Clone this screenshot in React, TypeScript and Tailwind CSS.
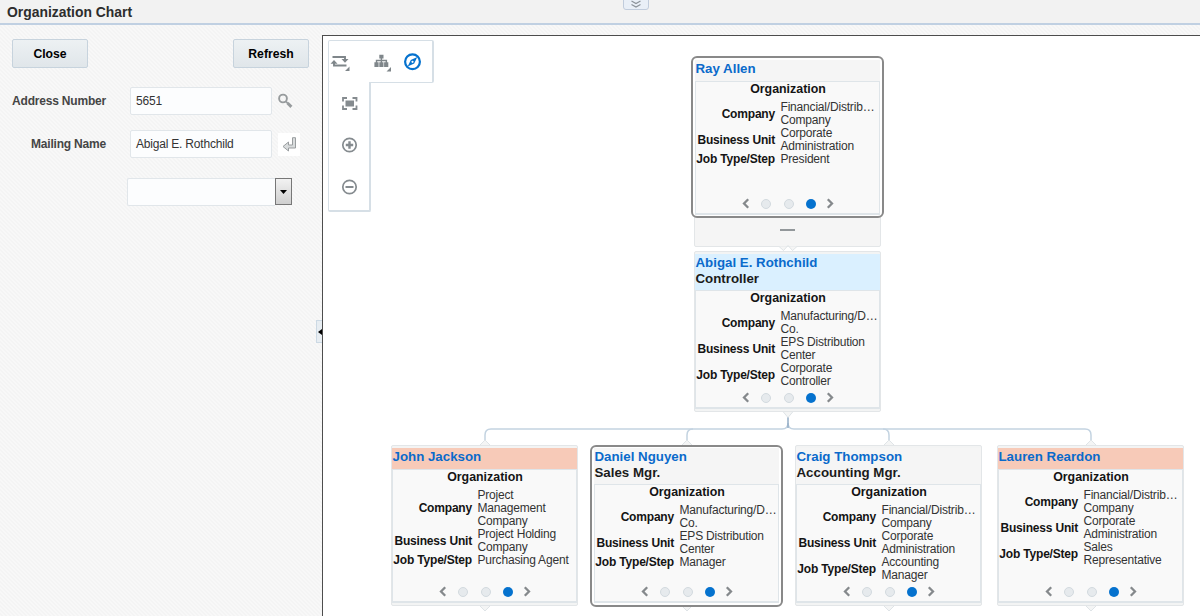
import React from 'react';
import clsx from 'clsx';

interface Field {
  label: string;
  lines: string[];
}

interface Person {
  name: string;
  title?: string;
  tone: 'plain' | 'focus' | 'alert';
  outlined?: boolean;
  fields: Field[];
}

const buildFields = (company: string[], unit: string[], job: string[]): Field[] => [
  { label: 'Company', lines: company },
  { label: 'Business Unit', lines: unit },
  { label: 'Job Type/Step', lines: job },
];

const ray: Person = {
  name: 'Ray Allen',
  tone: 'plain',
  outlined: true,
  fields: buildFields(['Financial/Distrib…', 'Company'], ['Corporate', 'Administration'], ['President']),
};

const abigal: Person = {
  name: 'Abigal E. Rothchild',
  title: 'Controller',
  tone: 'focus',
  fields: buildFields(['Manufacturing/D…', 'Co.'], ['EPS Distribution', 'Center'], ['Corporate', 'Controller']),
};

const john: Person = {
  name: 'John Jackson',
  tone: 'alert',
  fields: buildFields(['Project', 'Management', 'Company'], ['Project Holding', 'Company'], ['Purchasing Agent']),
};

const daniel: Person = {
  name: 'Daniel Nguyen',
  title: 'Sales Mgr.',
  tone: 'plain',
  outlined: true,
  fields: buildFields(['Manufacturing/D…', 'Co.'], ['EPS Distribution', 'Center'], ['Manager']),
};

const craig: Person = {
  name: 'Craig Thompson',
  title: 'Accounting Mgr.',
  tone: 'plain',
  fields: buildFields(['Financial/Distrib…', 'Company'], ['Corporate', 'Administration'], ['Accounting', 'Manager']),
};

const lauren: Person = {
  name: 'Lauren Reardon',
  tone: 'alert',
  fields: buildFields(['Financial/Distrib…', 'Company'], ['Corporate', 'Administration'], ['Sales', 'Representative']),
};

const Chevron: React.FC<{ flip?: boolean }> = ({ flip }) => (
  <svg width="8" height="11" viewBox="0 0 8 11" className={clsx('shrink-0', flip && 'rotate-180')}>
    <path d="M6.2 1.2 2 5.5l4.2 4.3" fill="none" stroke="#85898c" strokeWidth="2.3" />
  </svg>
);

const Pager: React.FC = () => (
  <div className="mt-auto mb-1 flex h-[11px] items-center pl-[46px]">
    <Chevron />
    <span className="ml-[11px] size-[10px] rounded-full border border-[#d3dadf] bg-[#e6eaed]" />
    <span className="ml-[13px] size-[10px] rounded-full border border-[#d3dadf] bg-[#e6eaed]" />
    <span className="mr-[10px] ml-[12px] size-[10px] rounded-full bg-[#0572ce]" />
    <Chevron flip />
  </div>
);

const PersonCard: React.FC<{ person: Person }> = ({ person }) => (
  <div
    className={clsx(
      'flex flex-col',
      person.outlined
        ? 'h-[162px] w-[193px] rounded-[6px] border-2 border-[#898989] bg-white px-[2px]'
        : 'h-[161px] w-[187px] rounded-[2px] border border-[#e3e6e8] bg-[#f3f4f4] pt-[2px] pb-[2px]',
      person.outlined && (person.title ? 'pt-px pb-[2px]' : 'pt-[2px] pb-px')
    )}
  >
    <div
      className={clsx(
        'w-full shrink-0 text-[13.3px] leading-[17px] font-bold whitespace-nowrap',
        person.title ? 'h-[36px]' : 'h-[21px]',
        person.tone === 'plain' && 'bg-[#f5f5f5]',
        person.tone === 'focus' && 'bg-[#daf0ff]',
        person.tone === 'alert' && 'bg-[#f7cab8]'
      )}
    >
      <div className="pl-[0.5px] text-[#0a6acb]">{person.name}</div>
      {person.title && <div className="-mt-px pl-[0.5px] text-[#1b1b1b]">{person.title}</div>}
    </div>
    <div className="flex grow flex-col border border-b-2 border-[#dfe5e9] bg-[#f9f9f9]">
      <div className="h-[15px] pl-px text-center text-[12.4px] leading-[15px] font-bold text-[#141414]">Organization</div>
      <div className="mt-1 flex flex-col">
        {person.fields.map((field) => (
          <div key={field.label} className="flex items-center text-[12px] leading-[13px] tracking-[-0.19px]">
            <div className="w-[79px] shrink-0 text-right font-bold whitespace-nowrap text-[#141414]">{field.label}</div>
            <div className="ml-[5.5px] whitespace-nowrap text-[#333]">
              {field.lines.map((line) => (
                <div key={line}>{line}</div>
              ))}
            </div>
          </div>
        ))}
      </div>
      <Pager />
    </div>
  </div>
);

const Connectors: React.FC = () => (
  <svg width="877" height="580" className="absolute top-0 left-0" fill="none">
    <g stroke="#c3d3e1" strokeWidth="1.5">
      <path d="M162 406v-7q0-6 6-6h291q6 0 6-6M465 387q0 6 6 6h291q6 0 6 6v7" />
      <path d="M364 406v-7q0-6 6-6M560 393q6 0 6 6v7" />
    </g>
    <path d="M465 381v11" stroke="#93adc6" strokeWidth="1.5" />
    <g fill="#f4f5f5" stroke="#dfe4e7">
      <path d="M459.500 375l5.500 6.500 5.500-6.500" />
      {[162, 364, 566, 768].map((x) => (
        <React.Fragment key={x}>
          <path d={`M${x - 6} 410l6-6 6 6`} />
          <path d={`M${x - 6} 569l6 6 6-6`} />
        </React.Fragment>
      ))}
    </g>
  </svg>
);

const Toolbar: React.FC = () => (
  <div className="absolute top-[4px] left-[5px] flex flex-col">
    <div className="flex h-[43px] w-[106px] items-center rounded-[2px] border border-r-2 border-[#d6dfe6] bg-white">
      <svg width="104" height="41" fill="none" className="shrink-0">
        <path d="M3.500 16h12.500v3M17.500 24.500H5v-3" stroke="#7f868a" strokeWidth="1.900" />
        <g fill="#7f868a">
          <path d="M12.500 18h7L16 21.800zM1.500 22.800h7L5 19zM20.500 25.500v4.500H16z" />
          <path d="M50.300 13.700h4.200v3.800h-1.400v1.300h5v2.400H59.300V26h-4.200v-4.800h1.500v-1h-3.500v1h1.400V26h-4.200v-4.800h1.400v-1h-3.500v1h1.400V26h-4.200v-4.800h1.400v-2.400h4.900v-1.300h-1.400zM62 26v4.500h-4.500z" />
        </g>
        <circle cx="83.500" cy="20.800" r="7.400" stroke="#0572ce" strokeWidth="2.200" />
        <path d="M88.300 16 85.200 22.500 78.700 25.600 81.800 19.100z" fill="#0572ce" />
        <circle cx="83.500" cy="20.800" r="1.100" fill="#fff" />
      </svg>
    </div>
    <div className="relative -mt-px flex h-[130px] w-[43px] flex-col rounded-b-[2px] border border-t-0 border-r-2 border-b-2 border-[#d6dfe6] bg-white">
      <svg width="40" height="128" fill="none">
        <g stroke="#858b8f">
          <path d="M14 19.500V16h4M23.500 16h4v3.500M27.500 23.500V27h-4M18 27h-4v-3.500" strokeWidth="1.800" />
          <circle cx="20.500" cy="63" r="6.700" strokeWidth="1.700" />
          <path d="M16.800 63h7.400M20.500 59.300v7.400" strokeWidth="2.400" />
          <circle cx="20.500" cy="105" r="6.700" strokeWidth="1.700" />
          <path d="M16.500 105h8" strokeWidth="2" />
        </g>
        <rect x="16.500" y="18.500" width="8.500" height="6" fill="#858b8f" />
      </svg>
    </div>
  </div>
);

const Sidebar: React.FC = () => (
  <aside className="relative w-[322px] shrink-0 pl-3 text-[12px] tracking-[-0.2px] text-[#454545]">
    <div className="mt-[14px] flex w-[297px] justify-between text-[12.2px] font-bold tracking-normal text-black">
      <button className="h-[29px] w-[76px] rounded-[2px] border border-[#c7d3dd] bg-linear-to-b from-[#edf1f3] to-[#e0e6ea] pt-px">
        Close
      </button>
      <button className="h-[29px] w-[76px] rounded-[2px] border border-[#c7d3dd] bg-linear-to-b from-[#edf1f3] to-[#e0e6ea] pt-px">
        Refresh
      </button>
    </div>
    <div className="mt-[19px] flex items-center">
      <label className="w-[94px] text-right font-bold whitespace-nowrap">Address Number</label>
      <div className="ml-6 flex h-[28px] w-[142px] items-center rounded-[2px] border border-[#e1e6ea] bg-[#fcfdfe] pl-[5px] text-[#333]">
        5651
      </div>
      <svg width="16" height="16" className="ml-[6px]" fill="none" stroke="#979b9d">
        <circle cx="5" cy="5.500" r="3.900" strokeWidth="1.900" />
        <path d="m8 8.500 1.800 1.800" strokeWidth="1.700" />
        <path d="m9.500 10 3.900 3.900" strokeWidth="2.900" />
      </svg>
    </div>
    <div className="mt-[15px] flex items-center">
      <label className="w-[94px] text-right font-bold whitespace-nowrap">Mailing Name</label>
      <div className="ml-6 flex h-[28px] w-[142px] items-center rounded-[2px] border border-[#e1e6ea] bg-[#fcfdfe] pl-[5px] text-[#333]">
        Abigal E. Rothchild
      </div>
      <div className="ml-[6px] flex h-[23px] w-[22px] items-center justify-center bg-white">
        <svg width="15" height="15" fill="#d9dcdd" stroke="#999d9f">
          <path d="M10.500.700h3v10.300h-7v3L1 9.500l5.500-4.500v3h4z" />
        </svg>
      </div>
    </div>
    <div className="mt-[20px] ml-[115px] flex h-[28px] w-[165px] justify-between">
      <div className="grow rounded-l-[2px] border border-r-0 border-[#e1e6ea] bg-[#fcfdfe]" />
      <div className="flex h-[27px] w-[17px] items-center justify-center border border-[#777] bg-linear-to-b from-[#f2f2f2] to-[#cfcfcf]">
        <svg width="7" height="4">
          <path d="M0 0h7L3.500 4z" />
        </svg>
      </div>
    </div>
    {/* collapse handle on the splitter */}
    <div className="absolute top-[295px] right-[-1px] flex h-[23px] w-[7px] items-center justify-end border border-[#ccd9e4] bg-[#e7edf2]">
      <svg width="4" height="6">
        <path d="M4 0v6L0 3z" />
      </svg>
    </div>
  </aside>
);

const App: React.FC = () => {
  return (
    <div className="flex h-[616px] w-[1200px] flex-col overflow-hidden bg-[#f6f6f6] font-['Liberation_Sans',Arial,sans-serif]">
      <header className="relative h-[25px] shrink-0 border-b-2 border-[#c0d0e2] bg-[#f2f2f2] pl-[7px]">
        <h1 className="text-[13.9px] leading-[25px] font-bold text-[#2d2d2d]">Organization Chart</h1>
        <div className="absolute top-[-2px] left-[623px] flex h-[12px] w-[26px] items-center justify-center rounded-b-[3px] border border-[#c1ccdc] bg-[#e9eff7]">
          <svg width="10" height="8" fill="none" stroke="#8b9299" strokeWidth="1.200">
            <path d="m.500 1 4.500 2.500L9.500 1M.500 4.500 5 7l4.500-2.500" />
          </svg>
        </div>
      </header>
      <div className="flex grow bg-[repeating-linear-gradient(45deg,#f8f8f8_0px,#f8f8f8_1.4px,#f4f4f4_1.4px,#f4f4f4_2.828px)]">
        <Sidebar />
        <main className="relative mt-[10px] grow overflow-hidden border-t border-l border-[#4d4d4d] bg-white">
          <Connectors />
          <Toolbar />
          {/* strip under the root card that collapses the level above */}
          <div className="absolute top-[180px] left-[371px] flex h-[31px] w-[187px] justify-center rounded-[2px] border border-[#e3e6e8] bg-[#f5f5f5] pt-[12px]">
            <span className="h-[2px] w-[15px] bg-[#92979a]" />
          </div>
          <svg width="20" height="7" className="absolute top-[208px] left-[455px]" fill="#f5f5f5" stroke="#dfe4e7">
            <path d="M1 2.500 5.500 6.500 10 1.500 14.500 6.500 19 2.500" />
          </svg>
          <div className="absolute top-[20px] left-[368px]">
            <PersonCard person={ray} />
          </div>
          <div className="absolute top-[215px] left-[371px]">
            <PersonCard person={abigal} />
          </div>
          <div className="absolute top-[409px] left-[68px]">
            <PersonCard person={john} />
          </div>
          <div className="absolute top-[409px] left-[267px]">
            <PersonCard person={daniel} />
          </div>
          <div className="absolute top-[409px] left-[472px]">
            <PersonCard person={craig} />
          </div>
          <div className="absolute top-[409px] left-[674px]">
            <PersonCard person={lauren} />
          </div>
        </main>
      </div>
    </div>
  );
};

export default App;
